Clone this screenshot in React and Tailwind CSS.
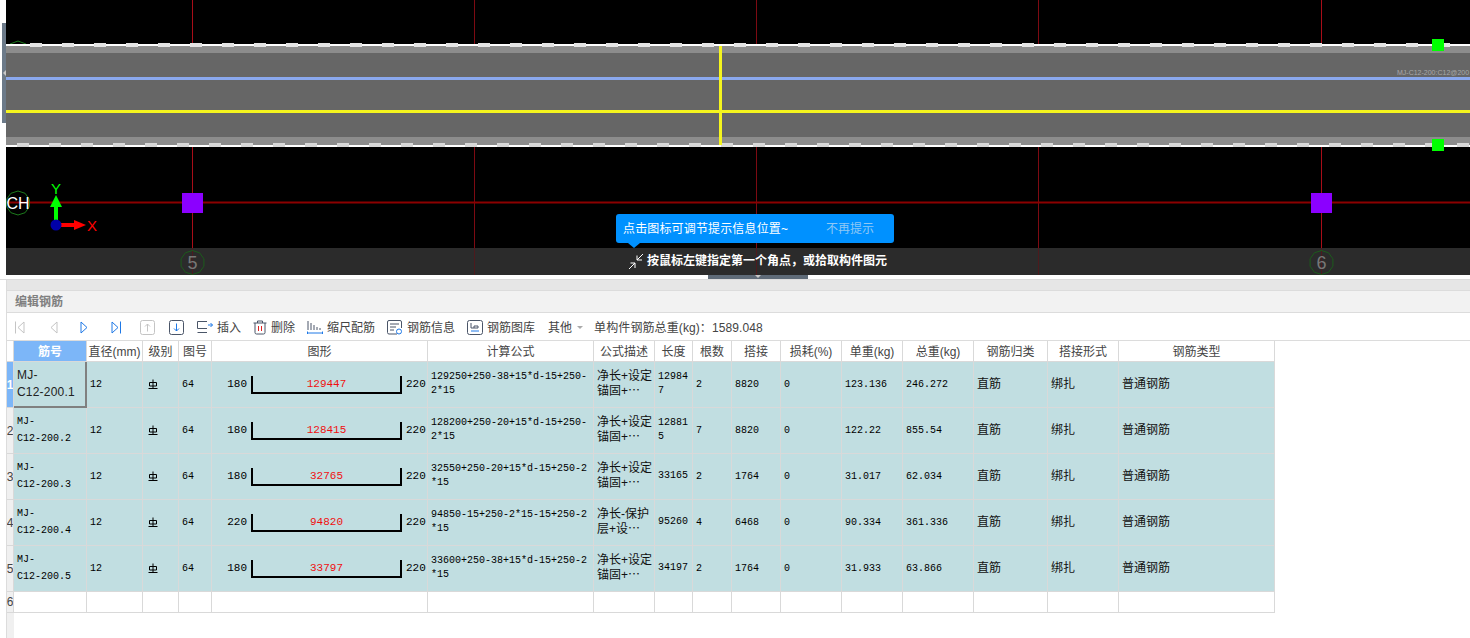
import React from 'react';

const FONT = { zh: 'font-["Liberation_Sans","Noto_Sans_CJK_SC",sans-serif]' };

const COLS = [73, 56, 36, 33, 216, 166, 61, 38, 39, 49, 61, 61, 71, 74, 71, 156];
const HEADERS = ['筋号', '直径(mm)', '级别', '图号', '图形', '计算公式', '公式描述', '长度', '根数', '搭接', '损耗(%)', '单重(kg)', '总重(kg)', '钢筋归类', '搭接形式', '钢筋类型'];

const ROWS = [
  { no: 'MJ-\nC12-200.1', left: 180, mid: '129447', right: 220, formula: '129250+250-38+15*d-15+250-\n2*15', desc: '净长+设定\n锚固+⋯', len: '12984\n7', count: 2, lap: 8820, single: '123.136', total: '246.272' },
  { no: 'MJ-\nC12-200.2', left: 180, mid: '128415', right: 220, formula: '128200+250-20+15*d-15+250-\n2*15', desc: '净长+设定\n锚固+⋯', len: '12881\n5', count: 7, lap: 8820, single: '122.22', total: '855.54' },
  { no: 'MJ-\nC12-200.3', left: 180, mid: '32765', right: 220, formula: '32550+250-20+15*d-15+250-2\n*15', desc: '净长+设定\n锚固+⋯', len: '33165', count: 2, lap: 1764, single: '31.017', total: '62.034' },
  { no: 'MJ-\nC12-200.4', left: 220, mid: '94820', right: 220, formula: '94850-15+250-2*15-15+250-2\n*15', desc: '净长-保护\n层+设⋯', len: '95260', count: 4, lap: 6468, single: '90.334', total: '361.336' },
  { no: 'MJ-\nC12-200.5', left: 180, mid: '33797', right: 220, formula: '33600+250-38+15*d-15+250-2\n*15', desc: '净长+设定\n锚固+⋯', len: '34197', count: 2, lap: 1764, single: '31.933', total: '63.866' },
];

const GRID_X = [
  { x: 192, color: '#a80d18' },
  { x: 474, color: '#7d0a12' },
  { x: 756, color: '#7d0a12' },
  { x: 1038, color: '#7d0a12' },
  { x: 1321, color: '#a80d18' },
];

// axis bubble, ten sided like the CAD view draws it
function Bubble({ cx, cy, r, stroke }) {
  const pts = [];
  for (let i = 0; i < 10; i++) {
    const a = (Math.PI / 5) * i - Math.PI / 2;
    pts.push(`${(cx + r * Math.cos(a)).toFixed(1)},${(cy + r * Math.sin(a)).toFixed(1)}`);
  }
  return <polygon points={pts.join(' ')} fill="none" stroke={stroke} />;
}

function CadCanvas() {
  const dashes = [];
  for (let x = 12; x < 1464; x += 32) dashes.push(x);
  return (
    <svg width="1464" height="275" viewBox="6 0 1464 275" className="block">
      <rect x="6" y="0" width="1464" height="275" fill="#000" />
      {GRID_X.map((g) => (
        <line key={g.x} x1={g.x + 0.5} x2={g.x + 0.5} y1="0" y2="275" stroke={g.color} strokeWidth="1" />
      ))}
      <path d="M10 44 L18 41 L26 44" stroke="#1c7a1c" fill="none" />
      {/* wall band */}
      <rect x="6" y="46" width="1464" height="99" fill="#666" />
      <rect x="6" y="46" width="1464" height="7" fill="#8c8c8c" />
      <rect x="6" y="137" width="1464" height="8" fill="#8c8c8c" />
      <rect x="6" y="44" width="1464" height="2" fill="#fff" />
      <rect x="6" y="145" width="1464" height="2" fill="#fff" />
      {dashes.map((x) => (
        <rect key={`t${x}`} x={x + 18} y="43" width="12" height="4" fill="#e4e4e4" />
      ))}
      {dashes.map((x) => (
        <rect key={`b${x}`} x={x + 5} y="143" width="12" height="4" fill="#d8d8d8" />
      ))}
      <rect x="6" y="77" width="1464" height="3" fill="#8aa8ee" />
      <rect x="6" y="110" width="1464" height="3" fill="#f5f51e" />
      <rect x="719" y="46" width="3" height="99" fill="#f5f51e" />
      <text x="1397" y="75" fontSize="7" fill="#a8a8a8" fontFamily="Liberation Sans">MJ-C12-200:C12@200</text>
      {/* grips */}
      <rect x="1432" y="39" width="12" height="12" fill="#00ff00" />
      <rect x="1432" y="139" width="12" height="12" fill="#00ff00" />
      {/* axis */}
      <line x1="6" x2="1470" y1="202.5" y2="202.5" stroke="#8b0000" strokeWidth="2" />
      <rect x="182" y="193" width="21" height="20" fill="#8b00ff" />
      <rect x="1311" y="193" width="21" height="20" fill="#8b00ff" />
      <Bubble cx={18} cy={203} r={12} stroke="#1c7a1c" />
      <text x="18" y="209" fontSize="16" fill="#fff" textAnchor="middle" fontFamily="Liberation Sans">CH</text>
      {/* ucs */}
      <line x1="56" x2="56" y1="222" y2="205" stroke="#00ff00" strokeWidth="4" />
      <polygon points="56,195 62,207 50,207" fill="#00ff00" />
      <line x1="56" x2="76" y1="225" y2="225" stroke="#ff0000" strokeWidth="4" />
      <polygon points="86,225 74,220 74,230" fill="#ff0000" />
      <circle cx="56" cy="225" r="5.5" fill="#0000a8" />
      <text x="56" y="194" fontSize="15" fill="#00ff00" textAnchor="middle" fontFamily="Liberation Sans">Y</text>
      <text x="92" y="231" fontSize="15" fill="#ff0000" textAnchor="middle" fontFamily="Liberation Sans">X</text>
      {/* status strip */}
      <rect x="6" y="248" width="1464" height="27" fill="#2b2b2b" />
      {GRID_X.map((g) => (
        <line key={`s${g.x}`} x1={g.x + 0.5} x2={g.x + 0.5} y1="248" y2="275" stroke="#4d1a1d" />
      ))}
      <Bubble cx={192.5} cy={262.5} r={12} stroke="#1c5c1c" />
      <Bubble cx={1321.5} cy={262.5} r={12} stroke="#1c5c1c" />
      <text x="192.5" y="269" fontSize="18" fill="#777" textAnchor="middle" fontFamily="Liberation Sans">5</text>
      <text x="1321.5" y="269" fontSize="18" fill="#777" textAnchor="middle" fontFamily="Liberation Sans">6</text>
    </svg>
  );
}

function HintOverlay() {
  return (
    <>
      <div className="absolute left-[616px] top-[214px] w-[278px] h-[29px] bg-[#0091ff] rounded-[3px] flex items-center pl-[7px] text-[12px] text-white">
        <span className="w-[203px] tracking-[0.15px]">点击图标可调节提示信息位置~</span>
        <span className="text-[#8fc8f5]">不再提示</span>
        <div className="absolute left-[12px] bottom-[-5px] w-0 h-0 border-x-[6px] border-x-transparent border-t-[5px] border-t-[#0091ff]" />
      </div>
      <div className="absolute left-[628px] top-[252px] flex items-center gap-[3px] text-white text-[12px] font-bold">
        <svg width="16" height="17" viewBox="0 0 16 17" fill="none" stroke="#fff" strokeWidth="1">
          <path d="M15 1 L9 7 M9 2.5 V7 H14" />
          <path d="M1 16 L7 10 M2.5 10 H7 V15" />
        </svg>
        <span>按鼠标左键指定第一个角点，或拾取构件图元</span>
      </div>
    </>
  );
}

function NavIcon({ dir, bar, color }) {
  const points = dir === 'left' ? '10,2 4,7.5 10,13' : '3,2 9,7.5 3,13';
  return (
    <svg width="13" height="15" viewBox="0 0 13 15" fill="none" stroke={color} strokeWidth="1">
      <polygon points={points} />
      {bar && <line x1={dir === 'left' ? 1.5 : 11.5} x2={dir === 'left' ? 1.5 : 11.5} y1="1.5" y2="13.5" />}
    </svg>
  );
}

function BoxArrow({ up, color, arrow }) {
  return (
    <svg width="15" height="15" viewBox="0 0 15 15" fill="none" stroke={color} strokeWidth="1">
      <rect x="0.5" y="0.5" width="14" height="14" rx="2" />
      {up ? <path d="M7.5 11.5 V4 M5 6.5 L7.5 4 L10 6.5" /> : <path d="M7.5 3.5 V11 M5 8.5 L7.5 11 L10 8.5" stroke={arrow} />}
    </svg>
  );
}

function ToolButton({ icon, label, className }) {
  return (
    <div className={`flex items-center gap-[4px] ${className}`}>
      {icon}
      <span>{label}</span>
    </div>
  );
}

function Toolbar() {
  return (
    <div className="h-[28px] pt-[2px] flex items-center bg-white border-b border-[#dcdcdc] text-[12px] text-[#444]">
      <div className="ml-[7px] w-[13px]"><NavIcon dir="left" bar color="#c4c4c4" /></div>
      <div className="ml-[20px] w-[13px]"><NavIcon dir="left" color="#c4c4c4" /></div>
      <div className="ml-[18px] w-[13px]"><NavIcon dir="right" color="#1e78e6" /></div>
      <div className="ml-[18px] w-[13px]"><NavIcon dir="right" bar color="#1e78e6" /></div>
      <div className="ml-[18px]"><BoxArrow up color="#c4c4c4" /></div>
      <div className="ml-[14px]"><BoxArrow color="#4a5568" arrow="#1e78e6" /></div>
      <ToolButton
        className="ml-[13px]"
        label="插入"
        icon={
          <svg width="16" height="13" viewBox="0 0 16 13" fill="none" stroke="#4a5568">
            <path d="M10 0.5 H0.5 V7.5 H10 M0.5 11.5 H10" />
            <path d="M11 4 H15.5 M13.5 2 L15.5 4 L13.5 6" stroke="#1e78e6" />
          </svg>
        }
      />
      <ToolButton
        className="ml-[12px]"
        label="删除"
        icon={
          <svg width="14" height="15" viewBox="0 0 14 15" fill="none" stroke="#4a5568">
            <path d="M0.5 3 H13.5 M4.5 3 V1 H9.5 V3 M2 3 V12.5 Q2 14 3.5 14 H10.5 Q12 14 12 12.5 V3" />
            <path d="M5.5 6 V11 M8.5 6 V11" stroke="#e02020" />
          </svg>
        }
      />
      <ToolButton
        className="ml-[12px]"
        label="缩尺配筋"
        icon={
          <svg width="16" height="15" viewBox="0 0 16 15" fill="none" stroke="#4a5568">
            <path d="M1 1 V10 M4 3 V10 M7 5 V10 M10 7 V10 M13 8 V10" />
            <path d="M0.5 13 H15.5 M0.5 11.5 V14 M15.5 11.5 V14" stroke="#1e78e6" />
          </svg>
        }
      />
      <ToolButton
        className="ml-[12px]"
        label="钢筋信息"
        icon={
          <svg width="16" height="15" viewBox="0 0 16 15" fill="none" stroke="#4a5568">
            <path d="M10 14 H2 Q0.5 14 0.5 12.5 V2 Q0.5 0.5 2 0.5 H13 Q14.5 0.5 14.5 2 V8" />
            <path d="M3 4 H12 M3 7 H9 M3 10 H7" />
            <circle cx="12" cy="11.5" r="2.5" stroke="#1e78e6" />
          </svg>
        }
      />
      <ToolButton
        className="ml-[12px]"
        label="钢筋图库"
        icon={
          <svg width="16" height="15" viewBox="0 0 16 15" fill="none" stroke="#4a5568">
            <rect x="0.5" y="0.5" width="15" height="14" rx="2" />
            <path d="M4 3 V8 H11 V6 H7 V8" />
            <path d="M4 11 H12" stroke="#1e78e6" />
          </svg>
        }
      />
      <span className="ml-[13px]">其他</span>
      <span className="ml-[5px] w-0 h-0 border-x-[3px] border-x-transparent border-t-[3px] border-t-[#aaa]" />
      <span className="ml-[11px] tracking-[0.1px]">单构件钢筋总重(kg)：1589.048</span>
    </div>
  );
}

function GradeIcon() {
  return (
    <svg width="10" height="11" viewBox="0 0 10 11" fill="none" stroke="#000" strokeWidth="1" className="ml-[2px]">
      <path d="M1.5 7 V3.5 H8.5 V7 H1.5" />
      <path d="M5 0.5 V9.5 M0.5 9.5 H9.5" />
    </svg>
  );
}

function ShapeCell({ left, mid, right }) {
  return (
    <div className="h-full flex items-center font-['Liberation_Mono',monospace] text-[11px] text-black">
      <span className="w-[35px] text-right mr-[4px] leading-none">{left}</span>
      <div className="relative w-[151px] h-[18px] border-x-2 border-b-[2px] border-black flex justify-center">
        <span className="text-[#f01010] text-[11px] leading-[16px]">{mid}</span>
      </div>
      <span className="ml-[4px] leading-none">{right}</span>
    </div>
  );
}

const cell = 'border-r border-b border-[#d9d9d9] overflow-hidden';
const mono = "font-['Liberation_Mono','Noto_Sans_CJK_SC',monospace] text-[10px] text-black pb-[1px]";
const zh = 'text-[12px] text-[#111] pb-[1px]';

function Txt({ children, className }) {
  return <div className={`h-full flex items-center whitespace-pre px-[3px] ${className}`}>{children}</div>;
}

function DataRow({ row, index }) {
  const active = index === 0;
  return (
    <>
      <div className={`${cell} flex items-center justify-center text-[12px] ${active ? 'bg-[#7cb6f8] text-white font-bold' : 'bg-[#f0f0f0] text-[#444]'}`}>{index + 1}</div>
      {active ? (
        <div className="bg-[#c1dee1] border-r-2 border-b-2 border-[#808080] overflow-hidden">
          <Txt className="text-[12px] leading-[17px] text-[#222] tracking-[0.2px]">{row.no}</Txt>
        </div>
      ) : (
        <div className={`${cell} bg-[#c1dee1]`}><Txt className={`${mono} leading-[17px]`}>{row.no}</Txt></div>
      )}
      <div className={`${cell} bg-[#c1dee1]`}><Txt className={mono}>12</Txt></div>
      <div className={`${cell} bg-[#c1dee1]`}><Txt className="text-[10px]"><GradeIcon /></Txt></div>
      <div className={`${cell} bg-[#c1dee1]`}><Txt className={mono}>64</Txt></div>
      <div className={`${cell} bg-[#c1dee1]`}><ShapeCell left={row.left} mid={row.mid} right={row.right} /></div>
      <div className={`${cell} bg-[#c1dee1]`}><Txt className={`${mono} leading-[14px]`}>{row.formula}</Txt></div>
      <div className={`${cell} bg-[#c1dee1]`}><Txt className={`${zh} leading-[15px]`}>{row.desc}</Txt></div>
      <div className={`${cell} bg-[#c1dee1]`}><Txt className={`${mono} leading-[14px]`}>{row.len}</Txt></div>
      <div className={`${cell} bg-[#c1dee1]`}><Txt className={mono}>{row.count}</Txt></div>
      <div className={`${cell} bg-[#c1dee1]`}><Txt className={mono}>{row.lap}</Txt></div>
      <div className={`${cell} bg-[#c1dee1]`}><Txt className={mono}>0</Txt></div>
      <div className={`${cell} bg-[#c1dee1]`}><Txt className={mono}>{row.single}</Txt></div>
      <div className={`${cell} bg-[#c1dee1]`}><Txt className={mono}>{row.total}</Txt></div>
      <div className={`${cell} bg-[#c1dee1]`}><Txt className={zh}>直筋</Txt></div>
      <div className={`${cell} bg-[#c1dee1]`}><Txt className={zh}>绑扎</Txt></div>
      <div className={`${cell} bg-[#c1dee1]`}><Txt className={zh}>普通钢筋</Txt></div>
    </>
  );
}

export default function App() {
  const gridCols = { gridTemplateColumns: `7px ${COLS.map((c) => `${c}px`).join(' ')}` };
  return (
    <div className={`relative w-[1470px] h-[638px] overflow-hidden bg-white ${FONT.zh}`}>
      <div className="flex h-[275px]">
        <div className="w-[6px] bg-white relative">
          <div className="absolute left-[2px] top-[23px] w-[4px] h-[100px] bg-[#6c7a89]" />
          <div className="absolute left-[3px] top-[70px] w-0 h-0 border-y-[3px] border-y-transparent border-r-[3px] border-r-[#c8c8c8]" />
        </div>
        <div className="flex-1 relative">
          <CadCanvas />
        </div>
      </div>
      <HintOverlay />
      <div className="h-[5px] relative border-b border-[#dcdcdc]">
        <div className="absolute left-[708px] top-0 w-[100px] h-[4px] bg-[#5f6b78]" />
        <div className="absolute left-[755px] top-0 w-0 h-0 border-x-[3px] border-x-transparent border-t-[3px] border-t-[#c8c8c8]" />
      </div>
      <div className="ml-[6px] border-l border-[#dcdcdc] h-[358px]">
        <div className="h-[11px] bg-[#e6e6e6] border-b border-[#dcdcdc]" />
        <div className="h-[22px] bg-[#f2f2f2] border-b border-[#dcdcdc] flex items-center pl-[8px] text-[12px] font-bold text-[#808080]">编辑钢筋</div>
        <Toolbar />
        <div className="grid grid-rows-[21px_46px_46px_46px_46px_46px_21px]" style={gridCols}>
          <div className="bg-white border-r border-b border-[#d9d9d9]" />
          {HEADERS.map((h, i) => (
            <div key={h} className={`flex items-center justify-center pt-[1px] border-r border-b border-[#d9d9d9] text-[12px] ${i === 0 ? 'bg-[#7cb6f8] text-white font-bold' : 'bg-white text-[#444]'}`}>{h}</div>
          ))}
          {ROWS.map((row, i) => <DataRow key={row.no} row={row} index={i} />)}
          <div className={`${cell} bg-[#f0f0f0] flex items-center justify-center text-[12px] text-[#444]`}>6</div>
          {COLS.map((c, i) => <div key={i} className={`${cell} bg-white`} />)}
        </div>
        <div className="w-[7px] h-[26px] bg-[#f0f0f0]" />
      </div>
    </div>
  );
}
